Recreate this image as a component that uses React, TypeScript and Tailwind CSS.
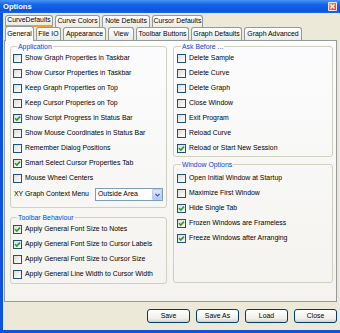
import React from "react";

const sans = "font-['Liberation_Sans',Arial,sans-serif]";

const row1: [string, number][] = [
  ["CurveDefaults", 48],
  ["Curve Colors", 45],
  ["Note Defaults", 48],
  ["Cursor Defaults", 51],
];

const row2: [string, number][] = [
  ["General", 29],
  ["File IO", 25],
  ["Appearance", 43],
  ["View", 26],
  ["Toolbar Buttons", 53],
  ["Graph Defaults", 51],
  ["Graph Advanced", 58],
];

function Box({ checked }: { checked?: boolean }) {
  return (
    <span className="flex h-[9px] w-[9px] shrink-0 items-center justify-center border border-[#1C5180] bg-[linear-gradient(135deg,#dcdcd7,#ffffff)]">
      {checked && (
        <svg width="7" height="7" viewBox="0 0 7 7">
          <path d="M1 3.3 L2.8 5.1 L6 1.6" fill="none" stroke="#21A121" strokeWidth="1.6" />
        </svg>
      )}
    </span>
  );
}

function Row({ label, checked }: { label: string; checked?: boolean }) {
  return (
    <div className="flex h-[15px] items-center gap-[3px]">
      <Box checked={checked} />
      <span className="whitespace-nowrap leading-none">{label}</span>
    </div>
  );
}

function Group({
  title,
  className,
  children,
}: {
  title: string;
  className?: string;
  children: React.ReactNode;
}) {
  return (
    <fieldset className={`min-w-0 rounded-[3px] border border-[#D0D0BF] ${className ?? ""}`}>
      <legend className="ml-[4px] px-[1px] leading-[9px] text-[#0046D5]">{title}</legend>
      {children}
    </fieldset>
  );
}

function Button({ label }: { label: string }) {
  return (
    <button className="flex h-[14px] w-[43px] items-center justify-center rounded-[3px] border border-[#003C74] bg-[linear-gradient(to_bottom,#ffffff,#f0efea_70%,#d8d2c6)] leading-none text-black">
      {label}
    </button>
  );
}

export default function App() {
  return (
    <div className={`${sans} flex h-[333px] w-[340px] flex-col overflow-hidden bg-[#ECE9D8] text-[6.9px] text-black`}>
      <div className="flex h-[13px] shrink-0 items-center justify-between bg-[linear-gradient(to_bottom,#4a94f7,#1565e6_35%,#0a57dd_80%,#1a63e4)] pl-[3px] pr-[3px]">
        <span className="text-[7.6px] font-bold leading-none text-white">Options</span>
        <span className="flex h-[9px] w-[9px] items-center justify-center rounded-[1px] border border-white/80 bg-[linear-gradient(135deg,#f29a7a,#d9441f)]">
          <svg width="5" height="5" viewBox="0 0 5 5">
            <path d="M0.5 0.5 L4.5 4.5 M4.5 0.5 L0.5 4.5" stroke="#fff" strokeWidth="1.2" />
          </svg>
        </span>
      </div>

      <div className="flex flex-1 flex-col border-b-[3px] border-l-[3px] border-[#0D53E1]">
        <div className="mt-[2px] flex h-[12px] gap-[2px] pl-[2px]">
          {row1.map(([label, w], i) => (
            <div
              key={label}
              style={{ width: w }}
              className={`flex items-center justify-center rounded-t-[3px] border border-[#919B9C] bg-[linear-gradient(to_bottom,#ffffff,#ecebe6)] leading-none whitespace-nowrap ${
                i === 0 ? "border-b-[2px] border-b-[#F0A030]" : "border-b-0"
              }`}
            >
              {label}
            </div>
          ))}
        </div>

        <div className="flex h-[13px] items-end gap-[2px] pl-[2px]">
          {row2.map(([label, w], i) => (
            <div
              key={label}
              style={{ width: w }}
              className={`flex items-center justify-center rounded-t-[3px] border border-b-0 border-[#919B9C] leading-none whitespace-nowrap ${
                i === 0
                  ? "relative z-10 -mb-px h-[15px] bg-[#FCFCFE]"
                  : "h-[13px] bg-[linear-gradient(to_bottom,#ffffff,#ecebe6)]"
              }`}
            >
              {label}
            </div>
          ))}
        </div>

        <div className="ml-[1px] h-[262px] w-[333px] border border-[#919B9C] bg-[linear-gradient(to_bottom,#fcfcfe,#f4f3ee)] pt-[1px] pl-[5px]">
          <div className="grid grid-cols-[157px_160px] gap-x-[6px]">
            <div className="flex flex-col">
              <Group title="Application" className="pb-[6px] pl-[2px]">
                <Row label="Show Graph Properties in Taskbar" />
                <Row label="Show Cursor Properties in Taskbar" />
                <Row label="Keep Graph Properties on Top" />
                <Row label="Keep Cursor Properies on Top" />
                <Row label="Show Script Progress in Status Bar" checked />
                <Row label="Show Mouse Coordinates in Status Bar" />
                <Row label="Remember Dialog Positions" />
                <Row label="Smart Select Cursor Properties Tab" checked />
                <Row label="Mouse Wheel Centers" />
                <div className="mt-[2px] flex h-[13px] items-center">
                  <span className="ml-[1px] w-[81px] whitespace-nowrap leading-none">XY Graph Context Menu</span>
                  <div className="flex h-[13px] w-[68px] items-center border border-[#7F9DB9] bg-white">
                    <span className="flex-1 pl-[2px] leading-none">Outside Area</span>
                    <span className="flex h-[11px] w-[10px] items-center justify-center rounded-[1px] border border-[#B9CCF5] bg-[linear-gradient(to_bottom,#dbe6fd,#b2c8f8)]">
                      <svg width="5" height="4" viewBox="0 0 5 4">
                        <path d="M0.5 1 L2.5 3 L4.5 1" fill="none" stroke="#4D6185" strokeWidth="1.2" />
                      </svg>
                    </span>
                  </div>
                </div>
              </Group>
              <Group title="Toolbar Behaviour" className="mt-[5px] pb-[1px] pl-[2px]">
                <Row label="Apply General Font Size to Notes" checked />
                <Row label="Apply General Font Size to Cursor Labels" checked />
                <Row label="Apply General Font Size to Cursor Size" />
                <Row label="Apply General Line Width to Cursor Width" />
              </Group>
            </div>

            <div className="flex flex-col">
              <Group title="Ask Before ..." className="pl-[3px]">
                <Row label="Delete Sample" />
                <Row label="Delete Curve" />
                <Row label="Delete Graph" />
                <Row label="Close Window" />
                <Row label="Exit Program" />
                <Row label="Reload Curve" />
                <Row label="Reload or Start New Session" checked />
              </Group>
              <Group title="Window Options" className="mt-[3px] pt-[2px] pb-[36px] pl-[3px]">
                <Row label="Open Initial Window at Startup" />
                <Row label="Maximize First Window" />
                <Row label="Hide Single Tab" checked />
                <Row label="Frozen Windows are Frameless" checked />
                <Row label="Freeze Windows after Arranging" checked />
              </Group>
            </div>
          </div>
        </div>

        <div className="mt-[7px] flex justify-end gap-[6px] pr-[3px]">
          <Button label="Save" />
          <Button label="Save As" />
          <Button label="Load" />
          <Button label="Close" />
        </div>
      </div>
    </div>
  );
}
